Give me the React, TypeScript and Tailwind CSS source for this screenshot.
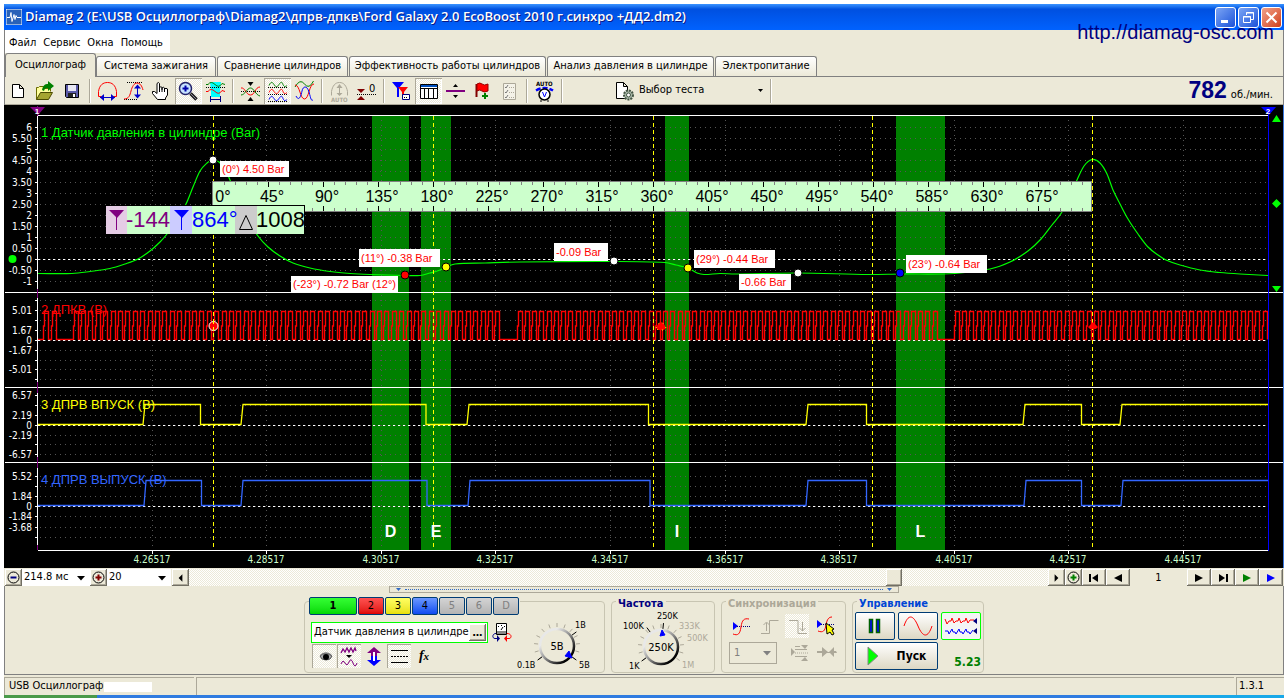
import { useState } from "react";
import type { ReactNode } from "react";
import clsx from "clsx";

const tabs = [
  { label: "Осциллограф", width: "w-[91px]" },
  { label: "Система зажигания", width: "w-[120px]" },
  { label: "Сравнение цилиндров", width: "w-[131px]" },
  { label: "Эффективность работы цилиндров", width: "w-[197px]" },
  { label: "Анализ давления в цилиндре", width: "w-[167px]" },
  { label: "Электропитание", width: "w-[102px]" },
];

const uiFont = "font-['DejaVu_Sans_Condensed','DejaVu_Sans',sans-serif]";
const checker =
  "bg-[repeating-conic-gradient(#ffffff_0_25%,#ece9d8_0_50%)] bg-[length:2px_2px]";

/* ---------- Toolbar icons, 27x26 box ---------- */

function Icon({ children }: { children: ReactNode }) {
  return (
    <svg width="27" height="26" viewBox="0 0 27 26" fill="none" strokeWidth="1" aria-hidden="true">
      {children}
    </svg>
  );
}

const ripple = "c2 -4 3 -4 5 -1s3 3 5 0 3 -3 4 0 3 2 4 1";

const icons: Record<string, ReactNode> = {
  new: <path d="M7.5 6.5h7l4 4v9h-11z M14.5 6.5v4h4" fill="#fff" stroke="#000" />,
  open: (
    <>
      <path d="M4.500 21.500v-12h2l1-1h4l1 2h6v3" fill="#ffff9c" stroke="#6b6b00" />
      <path d="M4.500 21.500l4-7h12l-4 7z" fill="#a5a530" stroke="#4a4a00" />
      <path d="M10 12c1-5 3-6 6-6V3l6 5-6 5v-3c-2 0-3 0-4 3z" fill="#008000" />
    </>
  ),
  save: (
    <>
      <path d="M6.500 6.500h13v13h-12l-1-1z" fill="#5a5aa8" stroke="#000" />
      <path d="M9 7h8v6H9z" fill="#e8e8f4" />
      <path d="M9 15h8v4H9z" fill="#222" />
      <path d="M14 16h2v3h-2z" fill="#fff" />
    </>
  ),
  width: (
    <>
      <path d="M7.500 18.500H4.500v-5C5.500 7 9 4.500 13.500 4.500S21.500 7 22.500 13.500v5h-3" stroke="#f00" />
      <path d="M6 19.500h15" stroke="#00c" />
      <path d="M10 16v7l-4-3.500z M17 16v7l4-3.500z" fill="#00c" />
    </>
  ),
  height: (
    <>
      <path d="M6 4.500h15 M3 21.500h14" stroke="#000" strokeDasharray="1 1" />
      <path d="M3 21c5 0 6-4 7-8s3-8 6-8 5 3 6 7" stroke="#f00" />
      <path d="M16.500 8v12" stroke="#00c" />
      <path d="M13 10.500l3.500-4 3.500 4z M13 16.500l3.500 4 3.500-4z" fill="#00c" />
    </>
  ),
  hand: (
    <path
      d="M9.500 21.500l-5-6v-2h2l2.500 2V5.500q1.500-2 2.500 0v6-2q1.500-1.500 2.500 0v2-1.500q1.500-1.500 2.500 0v2-1q1.500-1.500 3 0v6l-2 3v1.500z M11.500 11v3 M14 11v3 M16.500 12v2"
      fill="#fff"
      stroke="#000"
    />
  ),
  zoom: (
    <>
      <circle cx="10.500" cy="10.500" r="6" fill="#c8e4ff" stroke="#22226a" strokeWidth="1.500" />
      <path d="M7.500 10.500h6 M10.500 7.500v6" stroke="#00a" strokeWidth="2" />
      <path d="M15.500 15.500l6 6" stroke="#222" strokeWidth="3.500" />
      <path d="M15.500 15.500l5.500 5.500" stroke="#889" strokeWidth="1" />
    </>
  ),
  range: (
    <>
      <path d="M8 4h11l-1 8v7H9v-7z" fill="#0ff" />
      <path d="M4 6.500h2q3-4 7 0t7-1l3 1" stroke="#008000" />
      <path d="M4 9.500h19" stroke="#000" strokeDasharray="1 1" />
      <path d="M4 13.500h2q3-4 7 0t7-1l3 1" stroke="#f00" />
      <path d="M8.500 18v6 M18.500 18v6 M9 21.500h9" stroke="#000080" />
    </>
  ),
  merge: (
    <>
      <path d="M10.500 4h6l-3 4z M10.500 23h6l-3-4z" fill="#000" />
      <path d="M4 13.500h19" stroke="#000" strokeDasharray="1 1" />
      <path d="M4 10c4-1 5 7 9.500 7S18 9 23 9" stroke="#f00" />
      <path d="M4 17c4 0 6-7 9.500-7s5 7 9.500 8" stroke="#008000" />
    </>
  ),
  stack: (
    <>
      <path d={"M5 7.500" + ripple} stroke="#008000" />
      <path d={"M5 14.500" + ripple} stroke="#f00" />
      <path d={"M5 21.500" + ripple} stroke="#00f" />
      <path d="M4 9.500h19 M4 16.500h19 M4 23.500h19" stroke="#000" strokeDasharray="1 1" />
    </>
  ),
  overlay: (
    <>
      <path d="M4 9q5-9 9.500-3t9-3" stroke="#008000" />
      <path d="M4 7c5 0 5 14 9.500 14S18 6 23 6" stroke="#f00" />
      <path d="M5 18c3 6 5 0 6-5s5-6 7 1 2 9 4 8" stroke="#00f" />
    </>
  ),
  auto: (
    <>
      <path d="M5.500 17.500v-4C6.500 8 9 4.500 13.500 4.500S20.500 8 21.500 13.500v4" stroke="#aca899" />
      <path d="M13.500 8v9" stroke="#aca899" />
      <path d="M10.500 10l3-4 3 4z M10.500 15l3 3 3-3z" fill="#aca899" />
      <text x="5" y="24" fontSize="6" fontWeight="700" fill="#aca899">AUTO</text>
    </>
  ),
  zero: (
    <>
      <path d="M4 11h8l-4 4z M4 22h8l-4-4z" fill="#800000" />
      <path d="M4 16.500h19" stroke="#000" strokeDasharray="1 1" />
      <text x="16" y="14" fontSize="11" fill="#000">0</text>
    </>
  ),
  filter: (
    <>
      <path d="M4 4h12l-5 6v9h-2v-9z" fill="#00f" />
      <path d="M10 9h10l-4 5v4h-2v-4z" fill="#f00" />
      <path d="M14.500 16.500h7v5h-7z" fill="#fff" stroke="#000080" />
      <path d="M16 19.500h4" stroke="#000" strokeDasharray="1 1" />
    </>
  ),
  table: (
    <>
      <path d="M5.500 6.500h17v14h-17z" fill="#fff" stroke="#000" />
      <path d="M6 7h16v2H6z" fill="#0050c0" />
      <path d="M5 10.500h17 M9.500 10v10 M13.500 10v10 M18.500 10v10" stroke="#000" />
    </>
  ),
  split: (
    <>
      <path d="M4 13h19" stroke="#800080" strokeWidth="2" />
      <path d="M11 9h5l-2.500-3z M11 17h5l-2.500 3z" fill="#000" />
    </>
  ),
  flag: (
    <>
      <path d="M7.500 6v13" stroke="#800000" strokeWidth="2" />
      <path d="M8 6q3-2 5 0t6 0v7q-4 2-6 0t-5 0z" fill="#f00" stroke="#900" />
      <path d="M16 15v6 M13 18h6" stroke="#008000" strokeWidth="2" />
    </>
  ),
  list: (
    <>
      <path d="M7.500 5.500h12v16h-12z" fill="#f4f2e8" stroke="#aca899" />
      <path d="M9 9l1 1 2-3 M9 14l1 1 2-3 M9 19l1 1 2-3" stroke="#777" />
      <path d="M13 9.500h5 M13 14.500h5 M13 19.500h5" stroke="#aca899" strokeDasharray="1 1" />
    </>
  ),
  autoVolt: (
    <>
      <text x="5" y="8" fontSize="6" fontWeight="700" fill="#000">AUTO</text>
      <path d="M5 12.500q8.500-5 17 0" stroke="#00f" strokeWidth="2.500" strokeDasharray="5 2" />
      <circle cx="13.500" cy="16.500" r="5.500" fill="#fff" stroke="#000" strokeWidth="1.500" />
      <path d="M11.500 14l2 5 2-5" stroke="#00f" />
      <path d="M9 23h2 M16 23h2" stroke="#000" />
    </>
  ),
};

const toolGroups = [
  ["new", "open", "save"],
  ["width", "height", "hand", "zoom", "range"],
  ["merge", "stack", "overlay"],
  ["auto", "zero"],
  ["filter", "table", "split", "flag", "list"],
  ["autoVolt"],
];

function Separator() {
  return <div className="mx-[3px] h-6 w-0.5 border-l border-r border-l-[#aca899] border-r-white" />;
}

function ToolButton({ name, pressed }: { name: string; pressed?: boolean }) {
  return (
    <button
      aria-label={name}
      className={clsx(
        "flex h-[26px] w-[27px] items-center justify-center",
        pressed && "shadow-[inset_1px_1px_#aca899,inset_-1px_-1px_#ffffff]",
        pressed && checker
      )}
    >
      <Icon>{icons[name]}</Icon>
    </button>
  );
}

/* ---------- Chart ---------- */

const pressure: [number, number][] = [
  [38, 273.5], [72, 273.5], [90, 271.5], [110, 268.5], [125, 264], [138, 259], [150, 251], [160, 242],
  [167, 234], [176, 221], [186, 204], [193, 187], [200, 171], [207, 163], [213, 159.5], [219, 162],
  [225, 169], [230, 180], [238, 199], [247, 218], [258, 236], [268, 247], [280, 256], [293, 263],
  [310, 268], [330, 271.5], [350, 273.5], [370, 274.5], [405, 275.5], [420, 275.5], [430, 273],
  [440, 270], [446, 267], [455, 264], [485, 263], [520, 262], [613, 261.5], [665, 262.5], [676, 265],
  [688, 268], [697, 273], [704, 274.5], [720, 273.5], [735, 274], [797, 273], [868, 274.5],
  [900, 274], [955, 273.5], [990, 269], [1010, 262], [1028, 251], [1041, 239], [1052, 225],
  [1062, 212], [1070, 195], [1077, 180], [1084, 166], [1092, 159.5], [1100, 163], [1107, 174],
  [1113, 190], [1120, 204], [1128, 219], [1138, 234], [1148, 247], [1158, 255], [1166, 260],
  [1180, 265], [1200, 270], [1220, 272.5], [1240, 274], [1268, 275.5],
];

// Catmull-Rom through the samples
function smoothPath(pts: [number, number][]) {
  let d = `M${pts[0].join(" ")}`;
  for (let i = 0; i < pts.length - 1; i++) {
    const a = pts[Math.max(i - 1, 0)];
    const b = pts[i];
    const c = pts[i + 1];
    const e = pts[Math.min(i + 2, pts.length - 1)];
    // tangents are scaled by the step so that long flat runs do not overshoot
    const step = c[0] - b[0];
    const mb = (c[1] - a[1]) / (c[0] - a[0]);
    const mc = (e[1] - b[1]) / (e[0] - b[0]);
    d += `C${b[0] + step / 3} ${b[1] + (mb * step) / 3} ${c[0] - step / 3} ${c[1] - (mc * step) / 3} ${c[0]} ${c[1]}`;
  }
  return d;
}

// Crank sensor: 58 teeth and a gap of two per revolution
function crankPath() {
  const starts = [-367.5, 72.5, 516.5, 953.5, 1393.5];
  let d = "M38 339.5";
  for (let rev = 0; rev < 4; rev++) {
    const pitch = (starts[rev + 1] - starts[rev]) / 60;
    for (let i = 0; i < 58; i++) {
      const x = Math.round(starts[rev] + i * pitch) + 0.5;
      if (x < 38 || x > 1264) continue;
      d += `H${x}V326H${x + 1}V311.5H${x + 5}V339.5`;
    }
  }
  return d;
}

function camPath(edges: number[], low: number, high: number) {
  let d = `M38 ${low}`;
  edges.forEach((x, i) => {
    d += i % 2 === 0 ? `H${x - 1}L${x + 1} ${high}` : `H${x}V${low}`;
  });
  return d + "H1268";
}

const intakeEdges = [144, 200.5, 242, 426, 468, 648.5, 807, 866.5, 1024, 1081.5, 1121];
const exhaustEdges = [145, 201.5, 242, 427, 469, 650, 807, 866.5, 1025, 1081.5, 1122];

const scales: { y: number; text?: string }[] = [
  { y: 127, text: "6" }, { y: 138, text: "5.50" }, { y: 149, text: "5" }, { y: 160, text: "4.50" },
  { y: 171, text: "4" }, { y: 182, text: "3.50" }, { y: 193, text: "3" }, { y: 204, text: "2.50" },
  { y: 215, text: "2" }, { y: 226, text: "1.50" }, { y: 237, text: "1" }, { y: 248, text: "0.50" },
  { y: 259, text: "0" }, { y: 270, text: "-0.50" }, { y: 281, text: "-1" },
  { y: 300 }, { y: 310, text: "5.01" }, { y: 320 }, { y: 330, text: "1.67" }, { y: 340, text: "0" },
  { y: 350, text: "-1.67" }, { y: 360 }, { y: 369, text: "-5.01" }, { y: 379 },
  { y: 395, text: "6.57" }, { y: 405 }, { y: 415, text: "2.19" }, { y: 425, text: "0" },
  { y: 435, text: "-2.19" }, { y: 444 }, { y: 454, text: "-6.57" },
  { y: 476, text: "5.52" }, { y: 486 }, { y: 496, text: "1.84" }, { y: 506, text: "0" },
  { y: 516, text: "-1.84" }, { y: 527, text: "-3.68" }, { y: 537 },
];

const times = [
  { x: 152, text: "4.26517" }, { x: 266, text: "4.28517" }, { x: 381, text: "4.30517" },
  { x: 495, text: "4.32517" }, { x: 610, text: "4.34517" }, { x: 725, text: "4.36517" },
  { x: 839, text: "4.38517" }, { x: 954, text: "4.40517" }, { x: 1068, text: "4.42517" },
  { x: 1183, text: "4.44517" },
];

const bands = [
  { x: 372, w: 37, letter: "D" }, { x: 421, w: 30, letter: "E" },
  { x: 665, w: 24, letter: "I" }, { x: 896, w: 49, letter: "L" },
];

const callouts = [
  { x: 220, y: 161, w: 69, h: 16, text: "(0°) 4.50 Bar" },
  { x: 359, y: 249, w: 81, h: 18, text: "(11°) -0.38 Bar" },
  { x: 291, y: 276, w: 107, h: 16, text: "(-23°) -0.72 Bar (12°)" },
  { x: 554, y: 243, w: 54, h: 18, text: "-0.09 Bar" },
  { x: 694, y: 250, w: 81, h: 18, text: "(29°) -0.44 Bar" },
  { x: 739, y: 274, w: 52, h: 16, text: "-0.66 Bar" },
  { x: 906, y: 255, w: 81, h: 18, text: "(23°) -0.64 Bar" },
];

const points = [
  { x: 213, y: 160, fill: "#fff" }, { x: 405, y: 275, fill: "#f00" }, { x: 446, y: 267, fill: "#ff0" },
  { x: 614, y: 261, fill: "#fff" }, { x: 688, y: 268, fill: "#ff0" }, { x: 798, y: 273, fill: "#fff" },
  { x: 900, y: 273, fill: "#00f" },
];

function Ruler() {
  const ticks = Array.from({ length: 79 }, (_, i) => i + 1);
  return (
    <g>
      <rect x="212.500" y="181.500" width="879" height="30" fill="#ccffcc" stroke="#808080" />
      {ticks.map((i) => {
        const x = Math.round(213 + i * 11) + 0.5;
        const major = i % 5 === 0;
        const len = major ? 5 : 3;
        return (
          <path
            key={i}
            d={`M${x} 182v${len}M${x} 211v-${len}`}
            stroke={major ? "#000" : "#808080"}
          />
        );
      })}
      {Array.from({ length: 16 }, (_, i) => (
        <text
          key={i}
          x={i === 0 ? 223 : 217 + i * 55}
          y="202"
          fontSize="16"
          textAnchor="middle"
          fill="#000"
        >
          {i * 45}°
        </text>
      ))}
    </g>
  );
}

function CursorReadout() {
  return (
    <g fontSize="22">
      <rect x="106" y="205" width="199" height="29" fill="#000" />
      <rect x="106" y="206" width="21" height="28" fill="#e5cce5" />
      <rect x="127" y="206" width="43" height="28" fill="#ccffcc" />
      <rect x="170" y="206" width="22" height="28" fill="#ccccff" />
      <rect x="192" y="206" width="43" height="28" fill="#ccffcc" />
      <rect x="235" y="206" width="22" height="28" fill="#cccccc" />
      <rect x="257" y="206" width="47" height="28" fill="#ccffcc" />
      <path d="M109 210h15l-7 8z" fill="#800080" />
      <path d="M116.500 210v20" stroke="#800080" />
      <path d="M174 210h15l-7 8z" fill="#00f" />
      <path d="M181.500 210v20" stroke="#00f" />
      <path d="M246 215.500l6.500 14h-13z" fill="none" stroke="#000" />
      <text x="126" y="227" fill="#800080">-144</text>
      <text x="192" y="227" fill="#00f">864°</text>
      <text x="256" y="227" fill="#000">1008</text>
    </g>
  );
}

function Scope() {
  return (
    <svg
      viewBox="4 105 1280 463"
      className="block h-auto w-full bg-black font-['Liberation_Sans',Arial,sans-serif]"
      fill="none"
      role="img"
      aria-label="Осциллограмма"
    >
      {bands.map((b) => (
        <rect key={b.letter} x={b.x} y="116" width={b.w} height="434" fill="#008000" />
      ))}

      {/* Grid */}
      <g stroke="#555" strokeDasharray="1 4">
        {scales.map((s) => (
          <path key={s.y} d={`M40 ${s.y + 0.5}H1266`} />
        ))}
        {times.map((t) => (
          <path key={t.x} d={`M${t.x + 0.5} 120V550`} />
        ))}
      </g>
      <path d="M38 115.500H1268M5 292.500H1283M5 387.500H1283M5 462.500H1283M38 550.500H1268" stroke="#fff" />
      <path d="M38 259.500H1268M38 340.500H1268M38 425.500H1268M38 506.500H1268" stroke="#fff" strokeDasharray="2 3" />

      {/* Scale */}
      <path d="M37.500 106V550" stroke="#800080" />
      <path d="M37.500 116V289M37.500 298V382M37.500 393V457M37.500 468V545" stroke="#fff" />
      {scales.map((s) => (
        <path key={s.y} d={`M35 ${s.y + 0.5}h3`} stroke="#fff" />
      ))}
      <g fontSize="10" fill="#fff" textAnchor="end" className={uiFont}>
        {scales.map((s) => s.text && (
          <text key={s.y} x="32" y={s.y + 4}>{s.text}</text>
        ))}
      </g>
      <g fontSize="10" fill="#ccffcc" textAnchor="middle" className={uiFont}>
        {times.map((t) => (
          <text key={t.x} x={t.x} y="563">{t.text}</text>
        ))}
      </g>
      {times.map((t) => (
        <path key={t.x} d={`M${t.x + 0.5} 551v3`} stroke="#fff" />
      ))}

      {/* Signals */}
      <g fontSize="13">
        <text x="41" y="137" fill="#0f0">1 Датчик давления в цилиндре (Bar)</text>
        <text x="41" y="314" fill="#f00">2 ДПКВ (В)</text>
        <text x="41" y="409" fill="#ff0">3 ДПРВ ВПУСК (В)</text>
        <text x="41" y="484" fill="#3366ff">4 ДПРВ ВЫПУСК (В)</text>
      </g>
      <path d={smoothPath(pressure)} stroke="#0f0" strokeWidth="1.200" />
      <path d={crankPath()} stroke="#f00" strokeWidth="1.400" />
      <path d="M38 340.500H1268" stroke="#fff" strokeDasharray="2 3" />
      <path d={camPath(intakeEdges, 424.5, 404.5)} stroke="#ff0" strokeWidth="1.300" />
      <path d={camPath(exhaustEdges, 505.5, 480.5)} stroke="#3366ff" strokeWidth="1.300" />
      <path
        d="M213.500 116V550M433.500 116V550M653.500 116V550M872.500 116V550M1092.500 116V550"
        stroke="#ff0"
        strokeDasharray="4 3"
      />

      <g fontSize="16" fontWeight="700" fill="#fff" textAnchor="middle">
        {bands.map((b) => (
          <text key={b.letter} x={b.x + b.w / 2} y="537">{b.letter}</text>
        ))}
      </g>

      {/* Crank marks */}
      <circle cx="213.500" cy="326" r="4.500" fill="#f00" stroke="#fff" />
      <path d="M213.500 320v12" stroke="#ff0" strokeDasharray="4 3" />
      <path d="M656 328l2-4 3-2 3 2 2 4-2 2h-6z M1088 327l5-5 5 5-2 2h-6z" fill="#f00" />
      <path d="M656 328l2-4 3-2 3 2 2 4-2 2h-6z" stroke="#ff0" strokeDasharray="1 4" />

      <Ruler />
      <CursorReadout />

      {callouts.map((c) => (
        <g key={c.text}>
          <rect x={c.x} y={c.y} width={c.w} height={c.h} fill="#fff" />
          <text x={c.x + 2} y={c.y + c.h / 2 + 4} fontSize="11" fill="#f00">{c.text}</text>
        </g>
      ))}
      {points.map((p) => (
        <circle key={p.x} cx={p.x} cy={p.y} r="4" fill={p.fill} stroke="#000" />
      ))}

      {/* Cursors and side handles */}
      <path d="M30 107h15l-7 8z" fill="#800080" />
      <path d="M1261 107h15l-7 8z" fill="#00f" />
      <g fontSize="8" fontWeight="700" fill="#fff" textAnchor="middle">
        <text x="37" y="114">1</text>
        <text x="1268" y="114">2</text>
      </g>
      <path d="M1268.500 114V551" stroke="#00f" />
      <path d="M1272 122h9l-4.500-7z M1276.500 199l4.500 4.500-4.500 4.500-4.500-4.500z M1272 286h9l-4.500 6z" fill="#0f0" />
      <circle cx="12.500" cy="259" r="4" fill="#0f0" />
      <path d="M1283.500 105V568" stroke="#3a78e0" />
    </svg>
  );
}

/* ---------- Scroll row ---------- */

const raised =
  "bg-[#ece9d8] shadow-[inset_-1px_-1px_#716f64,inset_1px_1px_#ffffff,inset_-2px_-2px_#aca899]";

const navIcons: Record<string, string> = {
  left: "M11 3v8l-4-4z",
  right: "M7 3v8l4-4z",
  first: "M4 3v8h2V3z M13 3v8L7 7z",
  prev: "M13 3v8L5 7z",
  next: "M5 3v8l8-4z",
  last: "M5 3v8l6-4z M12 3v8h2V3z",
};

function NavButton({ icon, label, width = "w-6", color = "fill-black" }: {
  icon: string;
  label: string;
  width?: string;
  color?: string;
}) {
  return (
    <button aria-label={label} className={clsx("flex h-[17px] shrink-0 items-center justify-center", raised, width)}>
      <svg width="18" height="14" viewBox="0 0 18 14" className={color}>
        <path d={navIcons[icon]} />
      </svg>
    </button>
  );
}

function RoundButton({ sign, label, color }: { sign: "+" | "-"; label: string; color: string }) {
  return (
    <button aria-label={label} className={clsx("flex h-[17px] w-[17px] shrink-0 items-center justify-center", raised)}>
      <svg width="15" height="15" viewBox="0 0 15 15" fill="none" className={color}>
        <circle cx="7.500" cy="7.500" r="5.500" stroke="#000" />
        <path d={sign === "+" ? "M4.500 7.500h6M7.500 4.500v6" : "M4.500 7.500h6"} stroke="currentColor" strokeWidth="2" />
      </svg>
    </button>
  );
}

function Combo({ label, value, className }: { label: string; value: string; className: string }) {
  return (
    <div className={clsx("relative shrink-0", className)}>
      <select aria-label={label} className="block h-full w-full appearance-none pl-0.5 pr-4 outline-none">
        <option>{value}</option>
      </select>
      <svg width="9" height="5" viewBox="0 0 9 5" className="pointer-events-none absolute right-1 top-1/2 -mt-0.5 fill-current">
        <path d="M0 0h8L4 4.500z" />
      </svg>
    </div>
  );
}

function ScrollRow() {
  return (
    <div className="flex h-[18px] items-end bg-[#ece9d8] pl-px pr-px text-[11px]">
      <RoundButton sign="-" label="Уменьшить развёртку" color="text-[#000080]" />
      <Combo label="Развёртка" value="214.8 мс" className="h-[17px] w-[68px] bg-white" />
      <RoundButton sign="+" label="Увеличить развёртку" color="text-[#800000]" />
      <Combo label="Масштаб" value="20" className="mr-px h-[17px] w-[64px] bg-white" />
      <NavButton icon="left" label="Влево" width="w-[17px]" />
      <div className={clsx("flex h-[17px] grow justify-end", checker)}>
        <div className={clsx("mr-[146px] h-[17px] w-4", raised)} />
      </div>
      <NavButton icon="right" label="Вправо" width="w-[17px]" />
      <RoundButton sign="+" label="Добавить" color="text-[#008000]" />
      <NavButton icon="first" label="Первая" />
      <NavButton icon="prev" label="Предыдущая" />
      <span className="w-[57px] text-center">1</span>
      <NavButton icon="next" label="Следующая" />
      <NavButton icon="last" label="Последняя" />
      <NavButton icon="next" label="Воспроизвести" color="fill-[#008000]" />
      <NavButton icon="next" label="Воспроизвести всё" color="fill-[#0000ff]" />
    </div>
  );
}

/* ---------- Bottom panel ---------- */

const channels = [
  { label: "1", style: "w-12 font-bold from-[#33ff33] to-[#00d800] border-[#003c74]" },
  { label: "2", style: "w-[26px] from-[#ff5050] to-[#e00000] border-[#003c74]" },
  { label: "3", style: "w-[26px] from-[#ffff60] to-[#e8e000] border-[#003c74]" },
  { label: "4", style: "w-[26px] from-[#6a96ff] to-[#1048f0] border-[#003c74]" },
  { label: "5", style: "w-[26px] from-[#d4d4d4] to-[#b4b4b4] border-[#003c74] text-[#808080]" },
  { label: "6", style: "w-[26px] from-[#d4d4d4] to-[#b4b4b4] border-[#003c74] text-[#808080]" },
  { label: "D", style: "w-[26px] from-[#d4d4d4] to-[#b4b4b4] border-[#003c74] text-[#808080]" },
];

function Panel({ title, titleColor, width, children }: {
  title: string;
  titleColor: string;
  width: string;
  children: ReactNode;
}) {
  return (
    <section className={clsx("h-[72px] rounded border border-[#c8c5b2]", width)}>
      <h2 className={clsx("-mt-1 ml-1 h-3 w-max bg-[#ece9d8] px-0.5 text-[11px]/3 font-bold", titleColor)}>{title}</h2>
      {children}
    </section>
  );
}

function polar(cx: number, cy: number, r: number, deg: number) {
  const a = (deg * Math.PI) / 180;
  return `${(cx + r * Math.cos(a)).toFixed(1)} ${(cy + r * Math.sin(a)).toFixed(1)}`;
}

function KnobBody({ cx, cy, value, marks }: { cx: number; cy: number; value: string; marks: number[] }) {
  return (
    <>
      <defs>
        <linearGradient id={"rim" + value} x1="0" y1="0" x2="1" y2="1">
          <stop offset="0.250" stopColor="#e8e8e8" />
          <stop offset="0.500" stopColor="#909090" />
          <stop offset="0.850" stopColor="#000" />
        </linearGradient>
      </defs>
      {Array.from({ length: 13 }, (_, i) => 144 + i * 21).map((a) => (
        <path key={a} d={`M${polar(cx, cy, 19, a)}L${polar(cx, cy, 23, a)}`} stroke="#aca899" />
      ))}
      {marks.map((a) => (
        <path key={a} d={`M${polar(cx, cy, 18, a)}L${polar(cx, cy, 24, a)}`} stroke="#000" />
      ))}
      <circle cx={cx} cy={cy} r="17" fill="#ece9d8" stroke={`url(#rim${value})`} strokeWidth="2.500" />
      <text x={cx} y={cy + 4} fontSize="11" textAnchor="middle" fill="#000">{value}</text>
    </>
  );
}

function ChannelPanel() {
  const [active, setActive] = useState("1");
  const [name, setName] = useState("Датчик давления в цилиндре");

  return (
    <section className="flex h-[72px] w-[301px] rounded border border-[#c8c5b2] pl-1">
      <div className="-mt-[5px] w-[207px]">
        <div className="flex w-[211px] gap-px bg-[#ece9d8]">
          {channels.map((c) => (
            <button
              key={c.label}
              aria-pressed={active === c.label}
              onClick={() => setActive(c.label)}
              className={clsx("h-[18px] rounded-xs border bg-linear-to-b text-[11px]/4", c.style)}
            >
              {c.label}
            </button>
          ))}
        </div>
        <div className="ml-0.5 mt-[7px] flex items-start gap-1">
          <div className="flex h-[21px] w-[177px] shrink-0 border border-[#00ff00] bg-white p-px">
            <input
              aria-label="Название канала"
              value={name}
              onChange={(e) => setName(e.target.value)}
              className="w-0 grow pl-px text-[11px] outline-none"
            />
            <button aria-label="Выбрать датчик" className={clsx("w-[17px] text-[11px]/3 font-bold", raised)}>…</button>
          </div>
          <button aria-label="Датчик" className="shrink-0">
            <svg width="20" height="20" viewBox="0 0 20 20" fill="none">
              <path d="M4.500 1.500h10v11h-10z" fill="#fff" stroke="#000" />
              <path d="M5 9h9v3H5z" fill="#888" />
              <path d="M6 4.500h1M9 3.500h1M12 4.500h1M9 8l2-3" stroke="#000" />
              <path d="M4 11.500c-4 0-4 5-1 5h4" stroke="#000080" />
              <path d="M5 13v7l3-3.500z" fill="#000080" />
              <path d="M15 11.500c5 0 5 5 2 5h-3" stroke="#f00" />
              <path d="M15 13v7l-3-3.500z" fill="#f00" />
            </svg>
          </button>
        </div>
        <div className="ml-[3px] mt-px flex items-center gap-px">
          <button aria-label="Видимость" className={clsx("h-6 w-6 shadow-[inset_1px_1px_#aca899]", checker)}>
            <svg width="24" height="24" viewBox="0 0 24 24" fill="none">
              <path d="M8 12q5-5 12 0-1 4-6 4t-6-4z" fill="#aaa" stroke="#555" />
              <path d="M8 11q5-5 11-1l1 2q-6-4-12 0z" fill="#777" />
              <circle cx="14" cy="13" r="3" fill="#000" />
            </svg>
          </button>
          <button aria-label="Фильтр" className={clsx("h-6 w-6 shadow-[inset_1px_1px_#aca899]", checker)}>
            <svg width="24" height="24" viewBox="0 0 24 24" fill="none" stroke="#800080">
              <path d="M4 9l2-4 2 3 2-4 2 4 2-4 2 4 2-4 1 3" strokeWidth="1.300" />
              <path d="M9 11h6l-3 3z" fill="#000" stroke="none" />
              <path d="M4 20q2-5 4-1t4-1 4 1 4 0" />
            </svg>
          </button>
          <button aria-label="Инверсия" className="h-6 w-6">
            <svg width="24" height="24" viewBox="0 0 24 24">
              <path d="M12 3l7 6h-4v4H9V9H5z" fill="#800080" />
              <path d="M12 22l7-6h-4v-4H9v4H5z" fill="#00f" />
              <path d="M11 8h2v9h-2z" fill="#fff" />
            </svg>
          </button>
          <button aria-label="Линии" className={clsx("h-6 w-6 shadow-[inset_1px_1px_#aca899]", checker)}>
            <svg width="24" height="24" viewBox="0 0 24 24" stroke="#000">
              <path d="M4 6.500h17M4 18.500h17" />
              <path d="M4 12.500h17" strokeDasharray="2 1" />
            </svg>
          </button>
          <button aria-label="Функция" className="h-6 w-6 font-['Liberation_Serif',serif] text-[14px]/6 font-bold italic">
            f<span className="text-[11px]">x</span>
          </button>
        </div>
      </div>
      <svg width="88" height="70" viewBox="516 602 88 70" fill="none" className="shrink-0" role="img" aria-label="Чувствительность 5В">
        <KnobBody cx={557} cy={646} value="5В" marks={[-36, 36, 144]} />
        <path d="M565 656l4-5 3 7z" fill="#00f" stroke="#00f" />
        <g fontSize="9" fill="#000">
          <text x="575" y="628">1В</text>
          <text x="517" y="668">0.1В</text>
          <text x="579" y="668">5В</text>
        </g>
      </svg>
    </section>
  );
}

const xpButton = "flex items-center justify-center rounded-xs border border-[#003c74] bg-linear-to-b from-white to-[#ddd8c4]";

function BottomPanel() {
  return (
    <div className="flex h-[88px] flex-col items-center bg-[#ece9d8]">
      <button aria-label="Свернуть панель" className="flex h-[7px] w-[510px] items-center justify-between border border-[#aca899] px-1.5">
        <svg width="5" height="3" viewBox="0 0 5 3" className="fill-[#316ac5]"><path d="M0 0h5L2.500 3z" /></svg>
        <span className="mx-1 grow border-t border-dotted border-[#316ac5]" />
        <svg width="5" height="3" viewBox="0 0 5 3" className="fill-[#316ac5]"><path d="M0 0h5L2.500 3z" /></svg>
      </button>
      <div className="mt-2 flex gap-[6px]">
        <ChannelPanel />

        <Panel title="Частота" titleColor="text-[#000080]" width="w-[104px]">
          <svg width="102" height="62" viewBox="612 609 102 62" fill="none" role="img" aria-label="Частота 250K">
            <KnobBody cx={661} cy={646} value="250K" marks={[-126, -84, 144]} />
            <path d="M660 635l5-1-3-5z" fill="#00f" stroke="#00f" />
            <g fontSize="9">
              <text x="657" y="618" fill="#000">250K</text>
              <text x="623" y="628" fill="#000">100K</text>
              <text x="629" y="668" fill="#000">1K</text>
              <g fill="#aca899">
                <text x="679" y="628">333K</text>
                <text x="687" y="640">500K</text>
                <text x="682" y="667">1M</text>
              </g>
            </g>
          </svg>
        </Panel>

        <Panel title="Синхронизация" titleColor="text-[#aca899]" width="w-[125px]">
          <div className="mt-1 flex gap-1 pl-[7px]">
            <button aria-label="По уровню" className="h-6 w-6">
              <svg width="24" height="24" viewBox="0 0 24 24" fill="none">
                <path d="M4 8v8l5-4z" fill="#00f" />
                <path d="M8 12.500h13" stroke="#000080" strokeDasharray="1 1" />
                <path d="M4 20c5 2 7 0 8-7s3-9 8-8" stroke="#f00" />
              </svg>
            </button>
            <button aria-label="Фронт" className="h-6 w-6">
              <svg width="24" height="24" viewBox="0 0 24 24" fill="none" stroke="#aca899">
                <path d="M4 19.500h8.500v-13h9M9.500 9v8M6.500 11l3-3 3 3" />
              </svg>
            </button>
            <button aria-label="Спад" className={clsx("h-6 w-6", checker)}>
              <svg width="24" height="24" viewBox="0 0 24 24" fill="none" stroke="#aca899">
                <path d="M4 6.500h9v13h9M17.500 8v9M14.500 14l3 3 3-3" />
              </svg>
            </button>
            <button aria-label="Указать уровень" className="h-6 w-6">
              <svg width="24" height="24" viewBox="0 0 24 24" fill="none">
                <path d="M4 6v8l5-4z" fill="#00f" />
                <path d="M8 10.500h14" stroke="#000080" strokeDasharray="1 1" />
                <path d="M5 17c5 2 7 0 8-6s3-8 6-8" stroke="#f00" />
                <path d="M13 9l1 11 3-2 2 3 2-1-2-4 2-1z" fill="#ff0" stroke="#000" />
              </svg>
            </button>
          </div>
          <div className="mt-1 flex items-center pl-[7px]">
            <Combo label="Канал синхронизации" value="1" className="h-[22px] w-12 border border-[#aca899] pl-0.5 text-[11px] text-[#808080]" />
            <svg width="54" height="20" viewBox="0 0 54 20" fill="none" className="ml-3" aria-hidden="true">
              <path d="M2 5v8l4-4z M12 2h7l-3 4z M12 18h7l-3-4z M28 8h5V4l6 5-6 5v-4h-5z M47 8h-2V4l-5 5 5 5v-4h3z" fill="#aca899" />
              <path d="M6 6.500h12M6 13.500h12M6 3.500h5M28 9.500h19" stroke="#aca899" />
              <path d="M6 10h13" stroke="#aca899" strokeDasharray="1 1" />
            </svg>
          </div>
        </Panel>

        <Panel title="Управление" titleColor="text-[#0046d5]" width="w-[132px]">
          <div className="mt-0.5 flex gap-[3px] pl-0.5">
            <button aria-label="Пауза" className={clsx("h-7 w-10", xpButton)}>
              <svg width="14" height="16" viewBox="0 0 14 16">
                <path d="M1.500 1.500h3v13h-3z M8.500 1.500h3v13h-3z" fill="#00f" stroke="#006000" strokeWidth="1.500" />
              </svg>
            </button>
            <button aria-label="Одиночный" className={clsx("h-7 w-10", xpButton)}>
              <svg width="30" height="22" viewBox="0 0 30 22" fill="none" stroke="#f00">
                <path d="M1 11C5-1 10-1 15 11s10 12 14 0" />
              </svg>
            </button>
            <button aria-label="Непрерывный" className="flex h-7 w-10 items-center justify-center rounded-xs border border-[#00ff00] bg-[#f4f4f4]">
              <svg width="34" height="20" viewBox="0 0 34 20" fill="none">
                <path d="M1 3l2 5 2-3h2l1-3 2 5 2-2h2l1-3 2 5 2-2h2l1-3 2 5 2-3h4" stroke="#f00" />
                <path d="M1 15h3l1 3 3-5 1 3h2l1 2 3-5 1 3h2l1 2 3-5 1 3h2l1 2 3-4" stroke="#00f" />
                <path d="M33 2v6l-4-3z M33 12v6l-4-3z" fill="#000080" />
              </svg>
            </button>
          </div>
          <div className="mt-0.5 flex gap-[3px] pl-0.5">
            <button className={clsx("h-7 w-[83px] gap-[18px] text-[12px] font-bold", xpButton)}>
              <svg width="12" height="20" viewBox="0 0 12 20"><path d="M1 1v18l10-9z" fill="#0f0" stroke="#888" /></svg>
              Пуск
            </button>
            <span className="w-10 self-end text-right text-[12px]/4 font-bold text-[#008000]">5.23</span>
          </div>
        </Panel>
      </div>
    </div>
  );
}

/* ---------- Window ---------- */

const captionButton = "flex h-[21px] w-[21px] items-center justify-center rounded-[3px] border border-white bg-linear-to-br";

export default function App() {
  const [tab, setTab] = useState("Осциллограф");

  return (
    <div className={clsx("min-h-screen bg-white px-1 pt-1 text-[11px] text-black", uiFont)}>
      <header className="relative flex h-[26px] items-center bg-linear-to-b from-[#3a93ff] from-0% via-[#0050e0] via-20% to-[#0062ff] pl-0.5 pr-0.5">
        <svg width="16" height="16" viewBox="0 0 16 16" fill="none" aria-hidden="true">
          <path d="M0 0h16v16H0z" fill="#2a62b8" stroke="#fff" />
          <path d="M1 8.500h3l1-5 1 9 2-7 1 5 1-4 1 2h4" stroke="#fff" />
        </svg>
        <h1 className="ml-[3px] grow whitespace-nowrap font-['Open_Sans',sans-serif] text-[13px] font-semibold text-white [text-shadow:1px_1px_#0a1883]">
          Diamag 2 (E:\USB Осциллограф\Diamag2\дпрв-дпкв\Ford Galaxy 2.0 EcoBoost 2010 г.синхро +ДД2.dm2)
        </h1>
        <div className="flex gap-0.5">
          <button aria-label="Свернуть" className={clsx(captionButton, "from-[#7ca4f4] to-[#1c50d8]")}>
            <svg width="13" height="13" viewBox="0 0 13 13" fill="#fff"><path d="M2 9h7v3H2z" /></svg>
          </button>
          <button aria-label="Восстановить" className={clsx(captionButton, "from-[#7ca4f4] to-[#1c50d8]")}>
            <svg width="13" height="13" viewBox="0 0 13 13" fill="none" stroke="#fff">
              <path d="M4.500 4V1.500h7v7H9 M1.500 5.500h7v6h-7z M1 6h8 M4 2h8" />
            </svg>
          </button>
          <button aria-label="Закрыть" className={clsx(captionButton, "from-[#f0a088] to-[#d03c10]")}>
            <svg width="13" height="13" viewBox="0 0 13 13" stroke="#fff" strokeWidth="2"><path d="M1.500 1.500l10 10M11.500 1.500l-10 10" /></svg>
          </button>
        </div>
        <a
          href="#site"
          className="absolute right-2.5 top-4 font-['Liberation_Sans',sans-serif] text-[20px]/6 text-[#000080]"
        >
          http://diamag-osc.com
        </a>
      </header>

      <div className="border-x border-[#808080] bg-[#ece9d8]">
        <nav className="flex h-[23px] w-[165px] items-center gap-[7px] bg-white pl-1 pt-1">
          {["Файл", "Сервис", "Окна", "Помощь"].map((item) => (
            <button key={item}>{item}</button>
          ))}
        </nav>

        <div role="tablist" className="flex h-6 items-end border-b border-[#808080]">
          {tabs.map((t) => (
            <button
              key={t.label}
              role="tab"
              aria-selected={tab === t.label}
              onClick={() => setTab(t.label)}
              className={clsx(
                "shrink-0 whitespace-nowrap rounded-t-[3px] border border-b-0 border-[#808080] text-[11px]",
                t.width,
                tab === t.label ? "-mb-px h-6 bg-[#ece9d8]" : "mr-px h-5 bg-linear-to-b from-white to-[#ece9d8]"
              )}
            >
              {t.label}
            </button>
          ))}
        </div>

        <div className="flex h-7 items-center border-b border-[#aca899]">
          {toolGroups.map((group) => (
            <div key={group[0]} className="flex items-center">
              {group.map((name) => (
                <ToolButton key={name} name={name} pressed={["zoom", "stack", "table"].includes(name)} />
              ))}
              <Separator />
            </div>
          ))}
          <button className="ml-12 flex h-6 w-[153px] items-center">
            <svg width="21" height="22" viewBox="0 0 21 22" fill="none">
              <path d="M2.500 2.500h7l4 4v12h-11z M9.500 2.500v4h4" fill="#fff" stroke="#000" />
              <circle cx="14.500" cy="15" r="4.500" fill="#a8b8a8" stroke="#445544" strokeWidth="2" strokeDasharray="2 1" />
              <circle cx="14.500" cy="15" r="2" fill="#fff" stroke="#445544" />
            </svg>
            <span className="ml-1 grow text-left">Выбор теста</span>
            <svg width="5" height="3" viewBox="0 0 5 3" className="mr-1"><path d="M0 0h5L2.500 3z" /></svg>
          </button>
          <Separator />
          <div className="ml-auto pr-2.5">
            <b className="font-['Liberation_Sans',sans-serif] text-[23px]/6 text-[#000080]">782</b>
            <span className="ml-1">об./мин.</span>
          </div>
        </div>
      </div>

      <main>
        <Scope />
        <ScrollRow />
        <div className="border-x border-b border-[#808080]">
          <BottomPanel />
        </div>
      </main>

      <footer>
        <div className="flex h-5 items-stretch gap-0.5 bg-[#ece9d8] pt-0.5">
          <div className="flex w-[190px] items-center border-l border-t border-[#aca899] pl-1">
            USB Осциллограф
            <span className="h-2.5 w-12 bg-white" />
          </div>
          <div className="grow border-l border-t border-[#aca899]" />
          <div className="flex w-12 items-center border-l border-t border-[#aca899] pl-0.5">1.3.1</div>
        </div>
        <div className="flex h-1">
          <div className="w-[93px] bg-[#4a9a4a]" />
          <div className="grow bg-[#2f7be0]" />
          <div className="w-[164px] bg-[#18a8e8]" />
        </div>
      </footer>
    </div>
  );
}
